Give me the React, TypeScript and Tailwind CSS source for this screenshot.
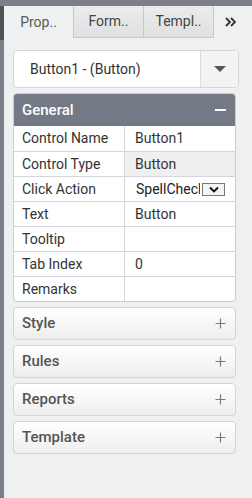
import React from "react";

const rows: { label: string; value: string; kind?: "ro" | "select" }[] = [
  { label: "Control Name", value: "Button1" },
  { label: "Control Type", value: "Button", kind: "ro" },
  { label: "Click Action", value: "SpellCheck", kind: "select" },
  { label: "Text", value: "Button" },
  { label: "Tooltip", value: "" },
  { label: "Tab Index", value: "0" },
  { label: "Remarks", value: "" },
];

function Plus() {
  return (
    <svg width="11" height="11" viewBox="0 0 11 11">
      <path d="M5.5 0.5v10M0.5 5.5h10" stroke="#7a7a7a" strokeWidth="1.2" />
    </svg>
  );
}

export default function App() {
  return (
    <div
      className="w-[252px] h-[498px] bg-[#eef0f2] flex flex-col overflow-hidden"
      style={{ fontFamily: "Roboto, 'Liberation Sans', sans-serif" }}
    >
      <div className="h-[6px] bg-[#7c7f87] shrink-0" />
      <div className="flex flex-1">
        <div className="w-[4px] shrink-0 flex flex-col">
          <div className="h-[34px] bg-[#4e5259]" />
          <div className="flex-1 bg-[#7c7f87]" />
        </div>
        <div className="flex-1 flex flex-col">
          {/* tabs */}
          <div className="h-[32px] flex items-stretch">
            <div className="w-[69px] flex items-center justify-center text-[14px] text-[#5a5a5a]">
              Prop..
            </div>
            <div className="w-[71px] flex items-center justify-center text-[14px] text-[#444] bg-gradient-to-b from-[#ececec] to-[#e0e0e0] border border-[#c6c8cc] border-t-0">
              Form..
            </div>
            <div className="w-[70px] flex items-center justify-center text-[14px] text-[#444] bg-gradient-to-b from-[#ececec] to-[#e0e0e0] border border-[#c6c8cc] border-t-0 border-l-0">
              Templ..
            </div>
            <div className="flex-1 flex items-center justify-center pr-[6px]">
              <svg width="11" height="10" viewBox="0 0 11 10">
                <path d="M1 1l4 4-4 4M6 1l4 4-4 4" stroke="#333" strokeWidth="1.8" fill="none" />
              </svg>
            </div>
          </div>
          <div className="pl-[9px] pt-[12px] flex flex-col">
            {/* dropdown */}
            <div className="w-[226px] h-[38px] flex rounded-[4px] border border-[#d3d5d9] bg-white overflow-hidden">
              <div className="flex-1 flex items-center pl-[16px] text-[14px] text-[#333]">
                Button1 - (Button)
              </div>
              <div className="w-[38px] bg-[#f3f3f3] border-l border-[#dcdcdc] flex items-center justify-center">
                <svg width="12" height="6" viewBox="0 0 12 6">
                  <path d="M0 0h12L6 6z" fill="#555" />
                </svg>
              </div>
            </div>
            {/* General */}
            <div className="w-[223px] mt-[5px] rounded-[4px] overflow-hidden border border-[#c9ccd3] bg-white">
              <div className="h-[32px] bg-[#737985] flex items-center justify-between pl-[8px] pr-[9px]">
                <span className="text-[15px] font-medium text-white">General</span>
                <div className="w-[11px] h-[2px] bg-white" />
              </div>
              {rows.map((r, i) => (
                <div
                  key={r.label}
                  className={`flex h-[25px] ${i > 0 ? "border-t border-[#d3d6dd]" : ""}`}
                >
                  <div className="w-[111px] flex items-center pl-[8px] text-[14px] text-[#333] border-r border-[#d3d6dd]">
                    {r.label}
                  </div>
                  {r.kind === "ro" ? (
                    <div className="flex-1 flex items-center pl-[10px] text-[14px] text-[#333] bg-[#efefef]">
                      {r.value}
                    </div>
                  ) : r.kind === "select" ? (
                    <div className="flex-1 flex items-center pl-[11px] text-[14px] text-[#222]">
                      <span className="w-[64px] overflow-hidden whitespace-nowrap">{r.value}</span>
                      <div className="ml-[2px] w-[23px] h-[13px] border border-[#777] bg-[#f4f4f4] flex items-center justify-center">
                        <svg width="10" height="7" viewBox="0 0 10 7">
                          <path d="M1 1.5l4 4 4-4" stroke="#111" strokeWidth="1.8" fill="none" />
                        </svg>
                      </div>
                    </div>
                  ) : (
                    <div className="flex-1 flex items-center pl-[10px] text-[14px] text-[#333]">
                      {r.value}
                    </div>
                  )}
                </div>
              ))}
            </div>
            {["Style", "Rules", "Reports", "Template"].map((t) => (
              <div
                key={t}
                className="w-[223px] h-[33px] mt-[5px] rounded-[4px] border border-[#d2d4d8] bg-gradient-to-b from-white to-[#eeeeee] flex items-center justify-between pl-[8px] pr-[9px]"
              >
                <span className="text-[15px] font-medium text-[#555]">{t}</span>
                <Plus />
              </div>
            ))}
          </div>
        </div>
      </div>
    </div>
  );
}
